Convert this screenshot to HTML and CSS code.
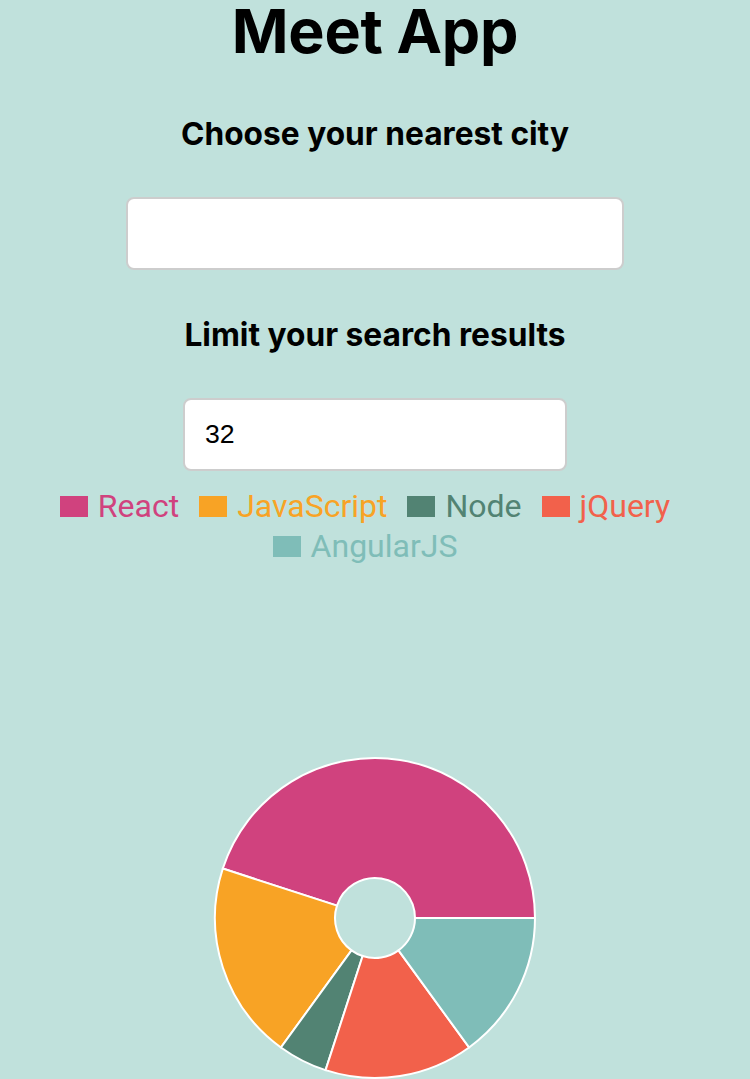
FILE: index.html
```html
<!DOCTYPE html>
<html lang="en">
<head>
<meta charset="utf-8">
<title>Meet App</title>
<link rel="stylesheet" href="styles.css">
</head>
<body>
<div class="app">
  <h1 class="title">Meet App</h1>
  <h4 class="label label-city">Choose your nearest city</h4>
  <input class="city-input" type="text" value="">
  <h4 class="label label-limit">Limit your search results</h4>
  <input class="number-input" type="text" value="32">
  <ul class="legend">
    <li class="legend-item react"><span class="swatch"></span><span class="legend-text">React</span></li>
    <li class="legend-item js"><span class="swatch"></span><span class="legend-text">JavaScript</span></li>
    <li class="legend-item node"><span class="swatch"></span><span class="legend-text">Node</span></li>
    <li class="legend-item jquery"><span class="swatch"></span><span class="legend-text">jQuery</span></li>
    <li class="legend-item angular"><span class="swatch"></span><span class="legend-text">AngularJS</span></li>
  </ul>
  <svg class="chart" width="750" height="520" viewBox="0 0 750 520">
    <g transform="translate(375 352)" stroke="#ffffff" stroke-width="2">
      <path class="slice-react" d="M160,0 A160,160 0 0 0 -152.17,-49.44 L-38.04,-12.36 A40,40 0 0 1 40,0 Z"/>
      <path class="slice-js" d="M-152.17,-49.44 A160,160 0 0 0 -94.05,129.44 L-23.51,32.36 A40,40 0 0 1 -38.04,-12.36 Z"/>
      <path class="slice-node" d="M-94.05,129.44 A160,160 0 0 0 -49.44,152.17 L-12.36,38.04 A40,40 0 0 1 -23.51,32.36 Z"/>
      <path class="slice-jquery" d="M-49.44,152.17 A160,160 0 0 0 94.05,129.44 L23.51,32.36 A40,40 0 0 1 -12.36,38.04 Z"/>
      <path class="slice-angular" d="M94.05,129.44 A160,160 0 0 0 160,0 L40,0 A40,40 0 0 1 23.51,32.36 Z"/>
    </g>
  </svg>
</div>
</body>
</html>
```
FILE: styles.css
```css
html, body {
  margin: 0;
  padding: 0;
  background: #c0e1dc;
}

body {
  font-family: Inter, "Noto Sans", sans-serif;
  color: #000;
}

.app {
  display: flex;
  flex-direction: column;
  align-items: center;
}

.title {
  margin: 0;
  font-size: 61px;
  line-height: 62px;
  font-weight: 700;
  letter-spacing: -0.3px;
}

.label {
  margin: 0;
  font-size: 31.7px;
  line-height: 40px;
  font-weight: 700;
}

.label-city {
  margin-top: 52px;
}

.label-limit {
  margin-top: 45px;
}

.city-input,
.number-input {
  box-sizing: border-box;
  height: 73px;
  margin-top: 43px;
  border: 2px solid #cdcdcd;
  border-radius: 8px;
  background: #ffffff;
  outline: none;
  font-family: "Liberation Sans", Arial, sans-serif;
  font-size: 26.67px;
  color: #000;
}

.city-input {
  width: 498px;
}

.number-input {
  width: 384px;
  padding: 0 20px;
}

.legend {
  list-style: none;
  margin: 15px 0 0;
  padding: 0;
  width: 750px;
  display: flex;
  flex-wrap: wrap;
  justify-content: center;
}

.legend-item {
  display: flex;
  align-items: center;
  height: 40px;
  margin-right: 20px;
  font-family: Roboto, "Liberation Sans", sans-serif;
  font-size: 32px;
}

.swatch {
  width: 28px;
  height: 21px;
  margin-right: 10px;
  flex: none;
}

.legend-text {
  line-height: 40px;
}

.react { color: #d0427e; }
.react .swatch { background: #d0427e; }
.js { color: #f8a325; }
.js .swatch { background: #f8a325; }
.node { color: #528373; }
.node .swatch { background: #528373; }
.jquery { color: #f2614b; }
.jquery .swatch { background: #f2614b; }
.angular { color: #7fbdb8; }
.angular .swatch { background: #7fbdb8; }

.chart {
  display: block;
  flex: none;
}

.slice-react { fill: #d0427e; }
.slice-js { fill: #f8a325; }
.slice-node { fill: #528373; }
.slice-jquery { fill: #f2614b; }
.slice-angular { fill: #7fbdb8; }
```
